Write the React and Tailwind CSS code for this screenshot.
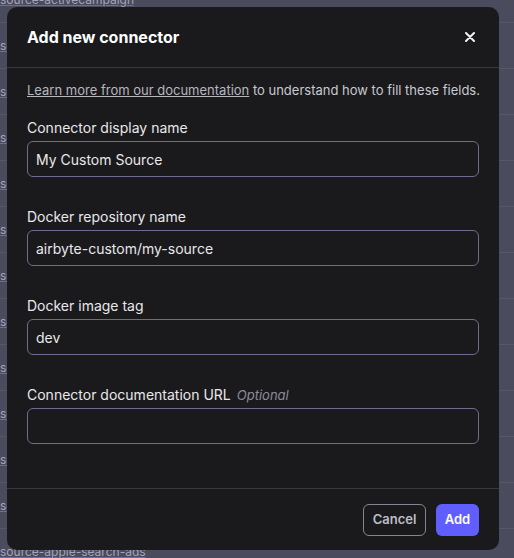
import React from "react";

const rows = [
  "source-activecampaign",
  "source-adjust",
  "source-aha",
  "source-aircall",
  "source-airtable",
  "source-alpha-vantage",
  "source-amazon-ads",
  "source-amazon-seller-partner",
  "source-amazon-sqs",
  "source-amplitude",
  "source-apify-dataset",
  "source-appfollow",
  "source-apple-search-ads",
  "source-asana",
];

function Field({ label, value, optional }) {
  return (
    <div className="flex flex-col">
      <div className="h-5 leading-5 text-[14px] text-[#e8e8eb] mb-[3px] flex items-baseline gap-[6px]">
        <span>{label}</span>
        {optional && <span className="text-[13px] italic text-[#8c8c98]">Optional</span>}
      </div>
      <div className="h-[36px] rounded-[6px] border border-[#6f6b8e] flex items-center px-[8px] text-[14px] text-[#e8e8eb]">
        {value}
      </div>
    </div>
  );
}

export default function App() {
  return (
    <div
      className="relative w-[514px] h-[558px] overflow-hidden bg-[#4a4b5c]"
      style={{ fontFamily: "Inter, 'Noto Sans', sans-serif" }}
    >
      <div className="flex flex-col -mt-[23px]">
        {rows.map((r) => (
          <div key={r} className="h-[46px] border-b border-[#565769] flex items-center">
            <span className="text-[12px] text-[#a3a4b8] underline decoration-[#6a68b0]">{r}</span>
          </div>
        ))}
      </div>

      <div className="absolute left-[7px] top-[7px] w-[492px] h-[543px] rounded-[10px] bg-[#1a1a1d] flex flex-col">
        <div className="h-[61px] shrink-0 border-b border-[#38383e] flex items-center justify-between px-5">
          <span className="text-[16px] font-bold text-white">Add new connector</span>
          <svg width="10" height="10" viewBox="0 0 10 10" className="mr-[4px]">
            <path d="M1 1 L9 9 M9 1 L1 9" stroke="#f2f2f4" strokeWidth="2" strokeLinecap="round" />
          </svg>
        </div>
        <div className="flex-1 px-5 pt-[14px] flex flex-col">
          <div className="h-4 leading-4 text-[13px] text-[#c9c9cf] whitespace-nowrap">
            <span className="underline text-[#b6b6be]">Learn more from our documentation</span> to understand how to fill these fields.
          </div>
          <div className="mt-5 flex flex-col gap-[30px]">
            <Field label="Connector display name" value="My Custom Source" />
            <Field label="Docker repository name" value="airbyte-custom/my-source" />
            <Field label="Docker image tag" value="dev" />
            <Field label="Connector documentation URL" value="" optional />
          </div>
        </div>
        <div className="h-[62px] shrink-0 border-t border-[#38383e] flex items-center justify-end gap-[10px] px-5">
          <button className="h-8 w-[63px] rounded-[6px] border border-[#85858f] text-[13px] font-semibold text-[#bdbdc5]">
            Cancel
          </button>
          <button className="h-8 w-[43px] rounded-[6px] bg-[#615eff] text-[13px] font-semibold text-white">
            Add
          </button>
        </div>
      </div>
    </div>
  );
}
